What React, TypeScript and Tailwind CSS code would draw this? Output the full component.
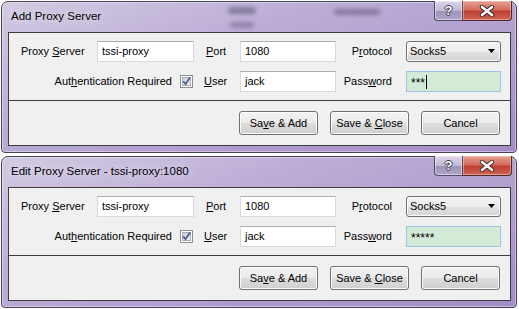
import React from "react";

const face = "font-['Liberation_Sans',Arial,sans-serif]";

// underlined access-key letter
function Mn({ children }: { children: React.ReactNode }) {
  return <span className="underline decoration-1 underline-offset-[1px]">{children}</span>;
}

function TextBox({
  value,
  w,
  green,
  caret,
}: {
  value: string;
  w: string;
  green?: boolean;
  caret?: boolean;
}) {
  return (
    <div
      className={`flex h-[21px] items-center border pl-[4px] text-[11px] ${w} ${
        green
          ? "border-[#9ec3e6] bg-[#d3ead7]"
          : "border-[#d5d9e0] border-t-[#abadb3] bg-white"
      }`}
    >
      <span className={green ? "pt-[2px] text-[12px] leading-none" : ""}>{value}</span>
      {caret && <span className="ml-[1px] h-[14px] w-px bg-black" />}
    </div>
  );
}

function Select() {
  return (
    <div className="flex h-[21px] w-[95px] items-center justify-between rounded-[3px] border border-[#707070] bg-[linear-gradient(to_bottom,#f4f4f4_0%,#ececec_50%,#e0e0e0_51%,#d6d6d6_100%)] pl-[3px] pr-[4px] text-[11px] shadow-[inset_0_0_0_1px_#fbfbfb]">
      <span>Socks5</span>
      <svg width="8" height="5" viewBox="0 0 8 5">
        <path d="M0 0 H7 L3.5 4 Z" fill="#000" />
      </svg>
    </div>
  );
}

function Check() {
  return (
    <div className="flex h-[13px] w-[13px] items-center justify-center border border-[#8e8f8f] bg-white">
      <div className="flex h-[9px] w-[9px] items-center justify-center border border-[#a9adb3] bg-[linear-gradient(135deg,#cbcfd5,#f4f4f4)]">
        <svg width="9" height="9" viewBox="0 0 9 9" className="overflow-visible">
          <path d="M1.2 4.4 L3.6 7 L8 0.6" fill="none" stroke="#4b5f99" strokeWidth="1.8" />
        </svg>
      </div>
    </div>
  );
}

function Btn({ children }: { children: React.ReactNode }) {
  return (
    <div className="flex h-[24px] w-[79px] items-center justify-center rounded-[3px] border border-[#707070] bg-[linear-gradient(to_bottom,#f2f2f2_0%,#ebebeb_50%,#dddddd_51%,#cfcfcf_100%)] text-[11px] shadow-[inset_0_0_0_1px_#fcfcfc]">
      <span>{children}</span>
    </div>
  );
}

function Window({
  title,
  pw,
  caret,
  smudge,
}: {
  title: string;
  pw: string;
  caret?: boolean;
  smudge?: boolean;
}) {
  return (
    <div className="relative flex h-[152px] w-[516px] flex-col rounded-t-[7px] rounded-b-[4px] border border-[#47425a] bg-[linear-gradient(160deg,#d3cae2_0%,#bcadd6_35%,#a28cc8_100%)] pb-[6px] pl-[6px] pr-[5px] shadow-[inset_0_0_0_1px_rgba(255,255,255,0.4)]">
      {smudge && (
        <>
          <div className="absolute left-[226px] top-[5px] h-[7px] w-[28px] rounded-full bg-[#4a4360] opacity-50 blur-[2px]" />
          <div className="absolute left-[228px] top-[20px] h-[6px] w-[24px] rounded-full bg-[#4a4360] opacity-40 blur-[2px]" />
          <div className="absolute left-[332px] top-[7px] h-[6px] w-[46px] rounded-full bg-[#4a4360] opacity-45 blur-[2px]" />
        </>
      )}
      <div className="relative flex h-[30px] items-start justify-between">
        <div className="pl-[3px] pt-[8px] text-[11.5px] leading-[13px] text-black [text-shadow:0_0_8px_rgba(255,255,255,0.9)]">
          {title}
        </div>
        <div className="-mr-[1px] -mt-[1px] flex h-[20px]">
          <div className="flex w-[29px] items-center justify-center rounded-bl-[4px] border border-t-0 border-[#4f4a66] bg-[linear-gradient(to_bottom,#ded6ea_0%,#c2b8d6_50%,#9c92b8_51%,#b0a6c8_100%)] shadow-[inset_0_0_0_1px_rgba(255,255,255,0.45)]">
            <span className="text-[13px] font-bold leading-none text-white [text-shadow:1px_0_#3c3a4c,-1px_0_#3c3a4c,0_1px_#3c3a4c,0_-1px_#3c3a4c]">
              ?
            </span>
          </div>
          <div className="flex w-[49px] items-center justify-center rounded-br-[4px] border border-l-0 border-t-0 border-[#4a2a2a] bg-[linear-gradient(to_bottom,#e6a192_0%,#d46d5e_45%,#bf3f33_55%,#d06452_100%)] shadow-[inset_0_0_0_1px_rgba(255,220,210,0.45)]">
            <svg width="16" height="12" viewBox="0 0 16 12">
              <path d="M3 2 L13 10 M13 2 L3 10" stroke="#3b2626" strokeWidth="4.4" strokeLinecap="round" />
              <path d="M3 2 L13 10 M13 2 L3 10" stroke="#ffffff" strokeWidth="2.6" strokeLinecap="round" />
            </svg>
          </div>
        </div>
      </div>

      <div className="flex flex-1 flex-col border border-[#3c3c3c] bg-[#f0f0f0] text-[11px] text-black">
        <div className="mt-[8px] flex h-[21px] items-center">
          <div className="w-[88px] pl-[12px]">
            Proxy <Mn>S</Mn>erver
          </div>
          <TextBox value="tssi-proxy" w="w-[97px]" />
          <div className="w-[46px] pl-[12px]">
            <Mn>P</Mn>ort
          </div>
          <TextBox value="1080" w="w-[96px]" />
          <div className="w-[70px] pr-[14px] text-right">
            P<Mn>r</Mn>otocol
          </div>
          <Select />
        </div>

        <div className="mt-[9px] flex h-[21px] items-center">
          <div className="w-[171px] pr-[8px] text-right">
            Aut<Mn>h</Mn>entication Required
          </div>
          <Check />
          <div className="w-[47px] pl-[11px]">
            <Mn>U</Mn>ser
          </div>
          <TextBox value="jack" w="w-[96px]" />
          <div className="w-[70px] pr-[14px] text-right">
            Pass<Mn>w</Mn>ord
          </div>
          <TextBox value={pw} w="w-[95px]" green caret={caret} />
        </div>

        <div className="mt-[8px] h-px bg-[#3c3c3c]" />

        <div className="mt-[10px] flex justify-end gap-[12px] pr-[10px]">
          <Btn>
            Sa<Mn>v</Mn>e &amp; Add
          </Btn>
          <Btn>
            Save &amp; <Mn>C</Mn>lose
          </Btn>
          <Btn>Cancel</Btn>
        </div>
      </div>
    </div>
  );
}

export default function App() {
  return (
    <div className={`flex h-[309px] w-[519px] flex-col gap-[3px] bg-white pl-[1px] pt-[1px] ${face}`}>
      <Window title="Add Proxy Server" pw="***" caret smudge />
      <Window title="Edit Proxy Server - tssi-proxy:1080" pw="*****" />
    </div>
  );
}
